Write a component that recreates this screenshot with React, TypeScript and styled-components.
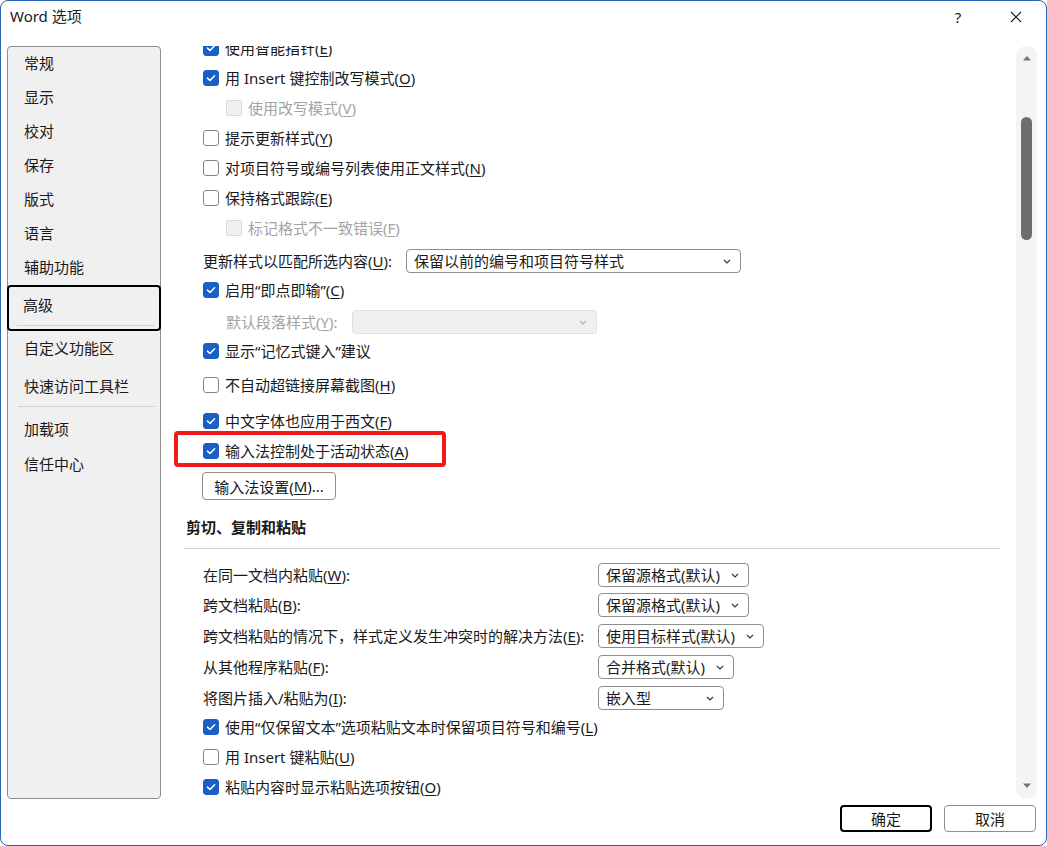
import React, { FC, ReactNode, useLayoutEffect, useRef } from 'react';
import styled, { createGlobalStyle } from 'styled-components';

const GlobalStyle = createGlobalStyle`
	html, body {
		margin: 0;
		padding: 0;
		background: #ffffff;
	}
	body {
		font-family: 'Segoe UI', 'Noto Sans', 'Noto Sans CJK SC', sans-serif;
		font-size: 15px;
		color: #1a1a1a;
	}
	u {
		text-underline-offset: 2px;
	}
`;

type NavItem = { label: string; active?: boolean; sep?: boolean; h: number; top: number };

// h: entry height, top: space above the label inside the entry
const navItems: NavItem[] = [
	{ label: '常规', h: 34, top: 4 },
	{ label: '显示', h: 34, top: 4 },
	{ label: '校对', h: 34, top: 4 },
	{ label: '保存', h: 34, top: 4 },
	{ label: '版式', h: 34, top: 4 },
	{ label: '语言', h: 34, top: 4 },
	{ label: '辅助功能', h: 34, top: 4 },
	{ label: '高级', active: true, sep: true, h: 46, top: 8 },
	{ label: '自定义功能区', h: 33, top: 5 },
	{ label: '快速访问工具栏', sep: true, h: 46, top: 10 },
	{ label: '加载项', h: 35, top: 7 },
	{ label: '信任中心', h: 35, top: 7 },
];

const CheckIcon = () => (
	<svg width="10" height="10" viewBox="0 0 10 10">
		<path
			d="M1.5 5.1 L4 7.5 L8.6 2.7"
			fill="none"
			stroke="#ffffff"
			strokeWidth="1.5"
			strokeLinecap="round"
			strokeLinejoin="round"
		/>
	</svg>
);

const Chevron: FC<{ disabled?: boolean }> = ({ disabled }) => (
	<svg width="8" height="5" viewBox="0 0 8 5">
		<path d="M1 1 L4 4 L7 1" fill="none" stroke={disabled ? '#b0b0b0' : '#333333'} strokeWidth="1.1" />
	</svg>
);

const Checkbox: FC<{ checked?: boolean; disabled?: boolean }> = ({ checked, disabled }) => (
	<Box $checked={checked} $disabled={disabled}>
		{checked && <CheckIcon />}
	</Box>
);

const Select: FC<{ width: number; value?: string; disabled?: boolean }> = ({ width, value, disabled }) => (
	<SelectBox $disabled={disabled} style={{ width }}>
		<span>{value}</span>
		<Chevron disabled={disabled} />
	</SelectBox>
);

type CheckRowProps = {
	checked?: boolean;
	disabled?: boolean;
	indent?: boolean;
	mt?: number;
	highlight?: boolean;
	children: ReactNode;
};

const CheckRow: FC<CheckRowProps> = ({ checked, disabled, indent, mt = 2, highlight, children }) => (
	<Row $mt={mt} $indent={indent} $highlight={highlight}>
		<Checkbox checked={checked} disabled={disabled} />
		<Label $disabled={disabled}>{children}</Label>
	</Row>
);

const PasteRow: FC<{ mt: number; label: ReactNode; value: string; width: number }> = ({ mt, label, value, width }) => (
	<Row $mt={mt} $gap={0}>
		<PasteLabel>{label}</PasteLabel>
		<Select width={width} value={value} />
	</Row>
);

const Scrollbar = () => (
	<Track>
		<svg width="10" height="6" viewBox="0 0 10 6">
			<path d="M1 5.5 L5 1 L9 5.5 Z" fill="#767676" />
		</svg>
		<TrackBody>
			<Thumb />
		</TrackBody>
		<svg width="10" height="6" viewBox="0 0 10 6">
			<path d="M1 0.5 L5 5 L9 0.5 Z" fill="#767676" />
		</svg>
	</Track>
);

const App: FC = () => {
	const scrollRef = useRef<HTMLDivElement>(null);

	useLayoutEffect(() => {
		if (scrollRef.current) scrollRef.current.scrollTop = 12;
	}, []);

	return (
		<>
			<GlobalStyle />
			<Window>
				<TitleBar>
					<Title>Word 选项</Title>
					<TitleButtons>
						<TitleButton>?</TitleButton>
						<TitleButton>
							<svg width="12" height="12" viewBox="0 0 12 12">
								<path d="M1 1 L11 11 M11 1 L1 11" stroke="#1a1a1a" strokeWidth="1.1" />
							</svg>
						</TitleButton>
					</TitleButtons>
				</TitleBar>
				<Body>
					<Nav>
						{navItems.map((item) => (
							<NavEntry key={item.label} $active={item.active} $h={item.h}>
								<NavText $top={item.top}>{item.label}</NavText>
								{item.sep && <NavSep />}
							</NavEntry>
						))}
					</Nav>
					<Content ref={scrollRef}>
						<CheckRow checked mt={0}>
							使用智能指针(<u>E</u>)
						</CheckRow>
						<CheckRow checked>
							用 Insert 键控制改写模式(<u>O</u>)
						</CheckRow>
						<CheckRow disabled indent>
							使用改写模式(<u>V</u>)
						</CheckRow>
						<CheckRow>
							提示更新样式(<u>Y</u>)
						</CheckRow>
						<CheckRow>
							对项目符号或编号列表使用正文样式(<u>N</u>)
						</CheckRow>
						<CheckRow>
							保持格式跟踪(<u>E</u>)
						</CheckRow>
						<CheckRow disabled indent>
							标记格式不一致错误(<u>F</u>)
						</CheckRow>
						<Row $mt={5} $gap={14}>
							<Label>
								更新样式以匹配所选内容(<u>U</u>):
							</Label>
							<Select width={335} value="保留以前的编号和项目符号样式" />
						</Row>
						<CheckRow checked mt={1}>
							启用“即点即输”(<u>C</u>)
						</CheckRow>
						<Row $mt={4} $indent $gap={14}>
							<Label $disabled>
								默认段落样式(<u>Y</u>):
							</Label>
							<Select width={245} disabled />
						</Row>
						<CheckRow checked mt={1}>
							显示“记忆式键入”建议
						</CheckRow>
						<CheckRow mt={6}>
							不自动超链接屏幕截图(<u>H</u>)
						</CheckRow>
						<CheckRow checked mt={8}>
							中文字体也应用于西文(<u>F</u>)
						</CheckRow>
						<CheckRow checked highlight>
							输入法控制处于活动状态(<u>A</u>)
						</CheckRow>
						<Row $mt={7}>
							<Button>
								输入法设置(<u>M</u>)...
							</Button>
						</Row>
						<SectionHeader>剪切、复制和粘贴</SectionHeader>
						<Divider />
						<PasteRow
							mt={12}
							label={<>在同一文档内粘贴(<u>W</u>):</>}
							value="保留源格式(默认)"
							width={151}
						/>
						<PasteRow mt={2} label={<>跨文档粘贴(<u>B</u>):</>} value="保留源格式(默认)" width={151} />
						<PasteRow
							mt={3}
							label={<>跨文档粘贴的情况下，样式定义发生冲突时的解决方法(<u>E</u>):</>}
							value="使用目标样式(默认)"
							width={166}
						/>
						<PasteRow mt={3} label={<>从其他程序粘贴(<u>F</u>):</>} value="合并格式(默认)" width={136} />
						<PasteRow mt={3} label={<>将图片插入/粘贴为(<u>I</u>):</>} value="嵌入型" width={126} />
						<CheckRow checked mt={1}>
							使用“仅保留文本”选项粘贴文本时保留项目符号和编号(<u>L</u>)
						</CheckRow>
						<CheckRow>
							用 Insert 键粘贴(<u>U</u>)
						</CheckRow>
						<CheckRow checked>
							粘贴内容时显示粘贴选项按钮(<u>O</u>)
						</CheckRow>
						<CheckRow>将图片插入/粘贴为锚定于段落</CheckRow>
					</Content>
					<Scrollbar />
				</Body>
				<Footer>
					<DialogButton $primary>确定</DialogButton>
					<DialogButton>取消</DialogButton>
				</Footer>
			</Window>
		</>
	);
};

const Window = styled.div`
	width: 1047px;
	height: 846px;
	box-sizing: border-box;
	border: 1px solid #2b63b8;
	border-radius: 8px;
	background: #ffffff;
	display: flex;
	flex-direction: column;
	overflow: hidden;
`;

const TitleBar = styled.div`
	height: 45px;
	flex-shrink: 0;
	display: flex;
	align-items: flex-start;
	justify-content: space-between;
	padding-left: 9px;
`;

const Title = styled.div`
	margin-top: 4px;
	font-size: 15px;
	line-height: 22px;
`;

const TitleButtons = styled.div`
	display: flex;
	margin-top: 5px;
	margin-right: 18px;
	gap: 34px;
`;

const TitleButton = styled.div`
	width: 24px;
	height: 22px;
	display: flex;
	align-items: center;
	justify-content: center;
	font-size: 15px;
	line-height: 22px;
`;

const Body = styled.div`
	height: 753px;
	flex-shrink: 0;
	display: flex;
	padding-left: 6px;
	padding-right: 9px;
`;

const Nav = styled.div`
	width: 154px;
	flex-shrink: 0;
	box-sizing: border-box;
	border: 1px solid #8f8f8f;
	border-radius: 4px;
	background: #f0f0f0;
	display: flex;
	flex-direction: column;
`;

const NavEntry = styled.div<{ $active?: boolean; $h: number }>`
	height: ${(p) => p.$h}px;
	flex-shrink: 0;
	box-sizing: border-box;
	display: flex;
	flex-direction: column;
	border: 2px solid ${(p) => (p.$active ? '#000000' : 'transparent')};
	border-radius: 4px;
	margin: ${(p) => (p.$active ? '0 -1px' : '0')};
	padding: ${(p) => (p.$active ? '0 7px 0 14px' : '0 8px 0 14px')};
`;

const NavText = styled.div<{ $top: number }>`
	margin-top: ${(p) => p.$top}px;
	height: 20px;
	font-size: 15px;
	line-height: 20px;
	white-space: nowrap;
`;

const NavSep = styled.div`
	height: 1px;
	background: #d2d2d2;
	margin: 10px 0 0 -6px;
	width: 137px;
`;

const Content = styled.div`
	flex: 1;
	overflow: hidden;
	padding: 0 16px 0 23px;
	display: flex;
	flex-direction: column;
`;

const Row = styled.div<{ $mt?: number; $indent?: boolean; $gap?: number; $highlight?: boolean }>`
	position: relative;
	flex-shrink: 0;
	height: 28px;
	display: flex;
	align-items: center;
	gap: ${(p) => p.$gap ?? 6}px;
	margin-top: ${(p) => p.$mt ?? 0}px;
	padding-left: ${(p) => (p.$indent ? 42 : 19)}px;

	${(p) =>
		p.$highlight &&
		`
		&::before {
			content: '';
			position: absolute;
			left: -10px;
			top: -6px;
			width: 272px;
			height: 36px;
			box-sizing: border-box;
			border: 4px solid #f2191b;
			border-radius: 4px;
			pointer-events: none;
		}
	`}
`;

const Box = styled.div<{ $checked?: boolean; $disabled?: boolean }>`
	width: 16px;
	height: 16px;
	flex-shrink: 0;
	box-sizing: border-box;
	border-radius: 3px;
	display: flex;
	align-items: center;
	justify-content: center;
	background: ${(p) => (p.$checked ? '#1a5fc6' : p.$disabled ? '#f0f0f0' : '#ffffff')};
	border: 1px solid ${(p) => (p.$checked ? '#1a5fc6' : p.$disabled ? '#d8d8d8' : '#858585')};
`;

const Label = styled.span<{ $disabled?: boolean }>`
	font-size: 15px;
	line-height: 20px;
	white-space: nowrap;
	color: ${(p) => (p.$disabled ? '#a3a3a3' : '#1a1a1a')};
`;

const PasteLabel = styled(Label)`
	width: 395px;
	flex-shrink: 0;
`;

const SelectBox = styled.div<{ $disabled?: boolean }>`
	height: 24px;
	box-sizing: border-box;
	flex-shrink: 0;
	display: flex;
	align-items: center;
	justify-content: space-between;
	padding: 0 9px 0 7px;
	border: 1px solid ${(p) => (p.$disabled ? '#e0e0e0' : '#8d8d8d')};
	border-radius: 4px;
	background: ${(p) => (p.$disabled ? '#f0f0f0' : '#ffffff')};
	font-size: 15px;
	line-height: 20px;
	white-space: nowrap;
`;

const Button = styled.div`
	width: 134px;
	height: 28px;
	box-sizing: border-box;
	border: 1px solid #8d8d8d;
	border-radius: 4px;
	display: flex;
	align-items: center;
	justify-content: center;
	font-size: 15px;
	margin-left: -1px;
`;

const SectionHeader = styled.div`
	flex-shrink: 0;
	margin-top: 13px;
	padding-left: 2px;
	height: 28px;
	line-height: 28px;
	font-size: 15px;
	font-weight: 700;
`;

const Divider = styled.div`
	flex-shrink: 0;
	height: 1px;
	background: #d4d4d4;
	margin-top: 7px;
`;

const Track = styled.div`
	width: 21px;
	flex-shrink: 0;
	background: #f4f4f4;
	border-radius: 10px;
	display: flex;
	flex-direction: column;
	align-items: center;
	padding: 9px 0 10px;
	box-sizing: border-box;
`;

const TrackBody = styled.div`
	flex: 1;
	width: 100%;
	display: flex;
	justify-content: center;
	padding-top: 56px;
`;

const Thumb = styled.div`
	width: 11px;
	height: 123px;
	border-radius: 6px;
	background: #6e6e6e;
`;

const Footer = styled.div`
	flex: 1;
	display: flex;
	justify-content: flex-end;
	align-items: flex-start;
	gap: 12px;
	padding: 6px 10px 0 0;
`;

const DialogButton = styled.div<{ $primary?: boolean }>`
	width: 92px;
	height: 27px;
	box-sizing: border-box;
	display: flex;
	align-items: center;
	justify-content: center;
	border-radius: 4px;
	border: ${(p) => (p.$primary ? '2px solid #000000' : '1px solid #8d8d8d')};
	font-size: 15px;
`;

export default App;
